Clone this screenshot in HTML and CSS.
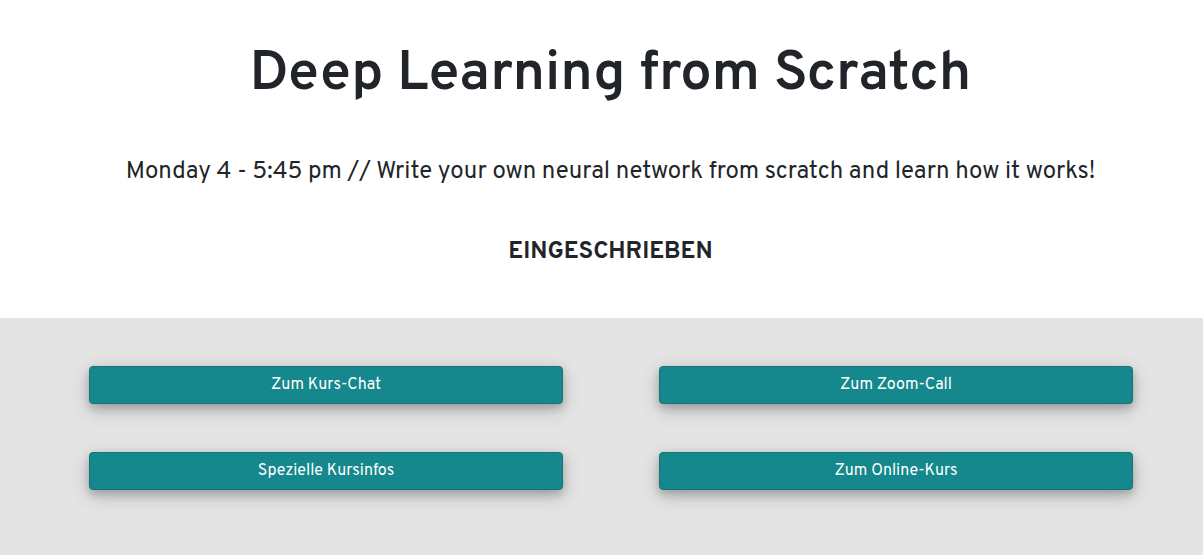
FILE: index.html
```html
<!DOCTYPE html>
<html lang="de">
<head>
<meta charset="utf-8">
<meta name="viewport" content="width=device-width, initial-scale=1">
<title>Deep Learning from Scratch</title>
<link rel="stylesheet" href="styles.css">
</head>
<body>
<header class="intro">
  <h1 class="title">Deep Learning from Scratch</h1>
  <p class="subtitle">Monday 4 - 5:45 pm // Write your own neural network from scratch and learn how it works!</p>
  <p class="status">EINGESCHRIEBEN</p>
</header>
<main class="actions">
  <button class="button" type="button">Zum Kurs-Chat</button>
  <button class="button" type="button">Zum Zoom-Call</button>
  <button class="button" type="button">Spezielle Kursinfos</button>
  <button class="button" type="button">Zum Online-Kurs</button>
</main>
</body>
</html>
```

FILE: styles.css
```css
* {
  box-sizing: border-box;
}

body {
  margin: 0;
  min-height: 100vh;
  display: flex;
  flex-direction: column;
  background: #fff;
  color: #212529;
  font-family: Overpass, Roboto, "Liberation Sans", sans-serif;
}

.intro {
  padding: 40px 32px 48px 50px;
  text-align: center;
}

.title,
.subtitle,
.status {
  margin: 0;
}

.title {
  font-size: 56px;
  line-height: 70px;
  font-weight: 600;
}

.subtitle {
  margin-top: 44px;
  font-size: 24px;
  line-height: 36px;
}

.status {
  margin-top: 44px;
  font-size: 24px;
  line-height: 36px;
  font-weight: 700;
}

.actions {
  flex: 1;
  display: grid;
  grid-template-columns: 1fr 1fr;
  align-content: start;
  gap: 48px 96px;
  padding: 48px 70px 48px 89px;
  background: #e4e4e4;
}

.button {
  height: 38px;
  padding: 0 12px;
  border: 1px solid #11757a;
  border-radius: 4px;
  background: #14888c;
  color: #fff;
  font-family: inherit;
  font-size: 16px;
  line-height: 24px;
  box-shadow: 0 4px 8px rgba(0, 0, 0, 0.2), 0 6px 20px rgba(0, 0, 0, 0.19);
  cursor: pointer;
}
```
